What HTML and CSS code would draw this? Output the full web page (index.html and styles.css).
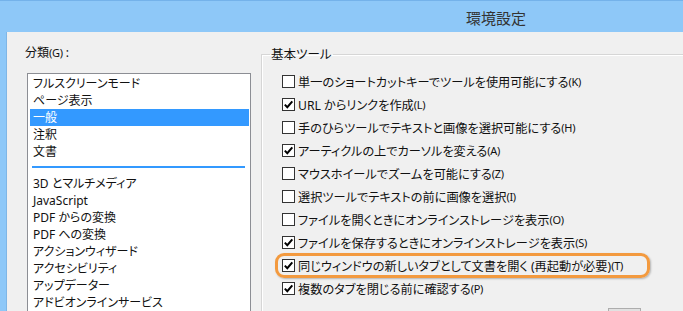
FILE: index.html
```html
<!DOCTYPE html>
<html lang="ja">
  <head>
    <meta charset="UTF-8" />
    <meta name="viewport" content="width=device-width, initial-scale=1.0" />
    <title>環境設定</title>
    <link rel="stylesheet" href="styles.css">
  </head>
  <body>
    <div class="window">
      <div class="titlebar"><span class="title">環境設定</span></div>
      <div class="frame">
        <div class="client">
          <div class="categories">
            <div class="cat-label">分類<span class="key">(G)</span> :</div>
            <ul class="listbox">
              <li>フルスクリーンモード</li>
              <li>ページ表示</li>
              <li class="selected">一般</li>
              <li>注釈</li>
              <li>文書</li>
              <li class="sep"></li>
              <li>3D とマルチメディア</li>
              <li>JavaScript</li>
              <li>PDF からの変換</li>
              <li>PDF への変換</li>
              <li>アクションウィザード</li>
              <li>アクセシビリティ</li>
              <li>アップデーター</li>
              <li>アドビオンラインサービス</li>
            </ul>
          </div>

          <fieldset class="group">
            <legend>基本ツール</legend>
            <div class="options">
              <div class="opt"><span class="box"></span>単一のショートカットキーでツールを使用可能にする<span class="key">(K)</span></div>
              <div class="opt checked"><span class="box"><svg viewBox="0 0 11 11"><path d="M1.8 5.6 L4.3 8.2 L9.3 2.4" /></svg></span>URL からリンクを作成<span class="key">(L)</span></div>
              <div class="opt"><span class="box"></span>手のひらツールでテキストと画像を選択可能にする<span class="key">(H)</span></div>
              <div class="opt checked"><span class="box"><svg viewBox="0 0 11 11"><path d="M1.8 5.6 L4.3 8.2 L9.3 2.4" /></svg></span>アーティクルの上でカーソルを変える<span class="key">(A)</span></div>
              <div class="opt"><span class="box"></span>マウスホイールでズームを可能にする<span class="key">(Z)</span></div>
              <div class="opt"><span class="box"></span>選択ツールでテキストの前に画像を選択<span class="key">(I)</span></div>
              <div class="opt"><span class="box"></span>ファイルを開くときにオンラインストレージを表示<span class="key">(O)</span></div>
              <div class="opt checked"><span class="box"><svg viewBox="0 0 11 11"><path d="M1.8 5.6 L4.3 8.2 L9.3 2.4" /></svg></span>ファイルを保存するときにオンラインストレージを表示<span class="key">(S)</span></div>
              <div class="opt checked flagged"><span class="box"><svg viewBox="0 0 11 11"><path d="M1.8 5.6 L4.3 8.2 L9.3 2.4" /></svg></span>同じウィンドウの新しいタブとして文書を開く (再起動が必要)<span class="key">(T)</span></div>
              <div class="opt checked"><span class="box"><svg viewBox="0 0 11 11"><path d="M1.8 5.6 L4.3 8.2 L9.3 2.4" /></svg></span>複数のタブを閉じる前に確認する<span class="key">(P)</span></div>
            </div>
            <div class="peek-button"></div>
          </fieldset>
        </div>
      </div>
    </div>
  </body>
</html>
```

FILE: styles.css
```css
body {
  margin: 0;
  width: 683px;
  height: 311px;
  overflow: hidden;
  background: #8ec8f8;
  font-family: "Noto Sans", "Noto Sans CJK JP", sans-serif;
  font-size: 12px;
  font-feature-settings: "palt";
  color: #111;
}
.window {
  display: flex;
  flex-direction: column;
  height: 311px;
  border-top: 1px solid #74b2ea;
  box-sizing: border-box;
}
.titlebar {
  height: 31px;
  flex: none;
  padding-left: 466px;
  box-sizing: border-box;
}
.title {
  font-family: "Noto Sans CJK JP", sans-serif;
  font-feature-settings: normal;
  font-size: 15px;
  line-height: 34px;
  color: #333;
}
.frame {
  flex: 1;
  display: flex;
  padding-left: 6px;
  min-height: 0;
}
.client {
  flex: 1;
  display: flex;
  background: #f0f0f0;
  border-left: 1px solid #7fb6e6;
  overflow: hidden;
  padding-top: 12px;
}
.categories {
  flex: none;
  width: 224px;
  padding-left: 20px;
}
.cat-label {
  line-height: 17px;
  margin-bottom: 12px;
  margin-left: -2px;
}
.key {
  font-size: 11px;
  letter-spacing: -0.3px;
}
.listbox {
  list-style: none;
  margin: 0;
  padding: 1px 1px 0 2px;
  height: 260px;
  background: #fff;
  border: 1px solid #8c8e94;
}
.listbox li {
  height: 17px;
  line-height: 17px;
  padding-left: 3px;
  white-space: nowrap;
}
.listbox li.selected {
  background: #3399ff;
  color: #fff;
}
.listbox li.sep {
  height: 2px;
  margin: 6px 4px 7px 2px;
  padding: 0;
  background: #3399ff;
}
.group {
  flex: none;
  width: 460px;
  margin: 2px 0 0 10px;
  padding: 0;
  border: 1px solid #d6d6d6;
  border-right: none;
  border-bottom: none;
  box-shadow: inset 1px 1px 0 #fff;
}
.group legend {
  margin-left: 8px;
  padding: 0 1px;
  line-height: 17px;
  font-size: 12.5px;
}
.options {
  padding-top: 7px;
  font-size: 12.2px;
}
.opt {
  position: relative;
  display: flex;
  align-items: center;
  height: 23px;
  padding-left: 20px;
  white-space: nowrap;
}
.box {
  flex: none;
  width: 11px;
  height: 11px;
  border: 1px solid #333;
  background: #fff;
  margin-right: 3px;
  display: flex;
}
.box svg {
  width: 11px;
  height: 11px;
}
.box path {
  fill: none;
  stroke: #000;
  stroke-width: 2;
}
.flagged::after {
  content: "";
  position: absolute;
  left: 13px;
  top: -1px;
  width: 369px;
  height: 19px;
  border: 3px solid #f39a3f;
  border-radius: 9px;
  box-shadow: 1px 1px 2px rgba(0, 0, 0, 0.25);
}
.peek-button {
  margin: 8px 0 0 346px;
  width: 33px;
  height: 22px;
  box-sizing: border-box;
  border: 1px solid #adadad;
  background: #e1e1e1;
}
```
